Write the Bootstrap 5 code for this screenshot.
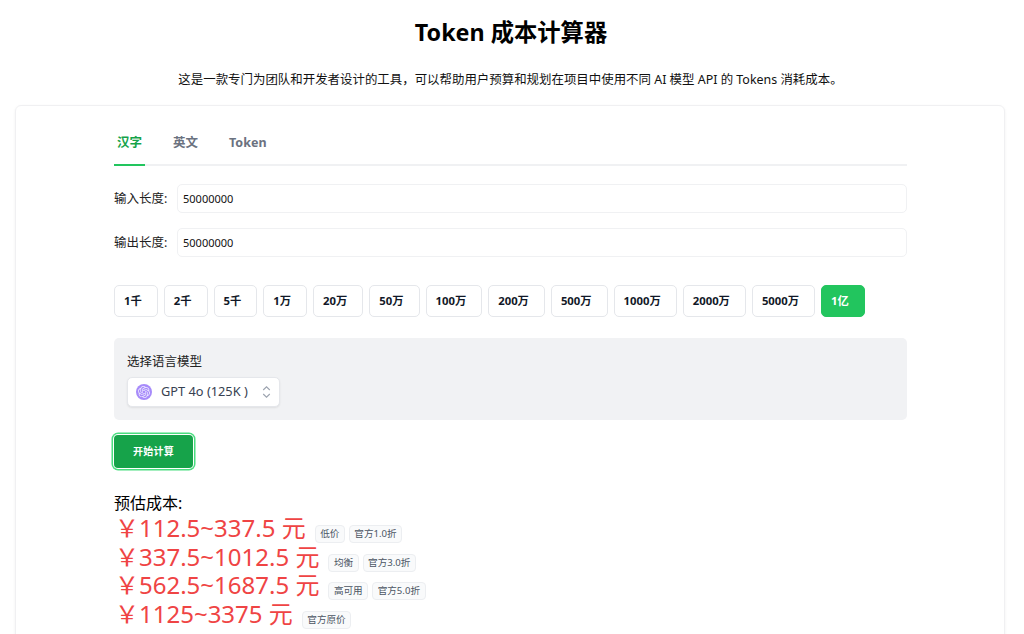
<!DOCTYPE html>
<html lang="zh">

<head>
    <meta charset="UTF-8" />
    <meta name="viewport" content="width=device-width, initial-scale=1.0" />
    <title>Token 成本计算器</title>
    <link href="https://cdn.jsdelivr.net/npm/bootstrap@5.3.0/dist/css/bootstrap.min.css" rel="stylesheet" />
    <style>
        html, body {
            height: 634px;
            overflow: hidden;
        }

        body {
            font-family: "Noto Sans", "Noto Sans CJK SC", sans-serif;
            font-size: 13px;
            color: #111827;
            background: #fff;
        }

        .page-title {
            font-size: 23.3px;
            font-weight: 700;
            line-height: 32px;
            margin: 0;
            padding: 16px 2px 0 0;
            color: #000;
        }

        .page-sub {
            font-size: 12.45px;
            line-height: 18px;
            margin: 0;
            padding: 23px 3px 0 0;
            height: 57px;
            color: #111;
        }

        .calc-card {
            margin: 0 19px 0 15px;
            border: 1px solid #f0f0f2;
            border-radius: 6px;
            box-shadow: 0 1px 3px rgba(0, 0, 0, .06);
            padding: 18px 97px 60px 98px;
        }

        .tab-row {
            border-bottom: 2px solid #f0f1f3;
            height: 42px;
            margin-bottom: 18px;
        }

        .tab-item {
            font-size: 12.5px;
            font-weight: 700;
            color: #6b7280;
            line-height: 38px;
            height: 42px;
            padding: 0 3px;
            margin-right: 25px;
        }

        .tab-item.on {
            color: #16a34a;
            border-bottom: 2px solid #22c55e;
        }

        .len-row {
            height: 29px;
            margin-bottom: 15px;
        }

        .len-label {
            width: 63px;
            flex: none;
            padding-top: 2px;
            color: #222;
            font-size: 12.5px;
        }

        .len-input {
            height: 29px;
            padding: 0 5px;
            font-size: 11px;
            border: 1px solid #f0f1f3;
            border-radius: 5px;
            color: #111;
        }

        .amt-row {
            gap: 6px;
            margin-top: 28px;
        }

        .amt-btn {
            height: 32px;
            padding: 0 15px 0 9px;
            font-size: 11.3px;
            font-weight: 700;
            color: #111827;
            background: #fff;
            border: 1px solid #e5e7eb;
            border-radius: 5px;
        }

        .amt-btn.on {
            background: #22c55e;
            border-color: #22c55e;
            color: #fff;
        }

        .model-panel {
            background: #f1f2f4;
            border-radius: 5px;
            height: 82px;
            padding: 14px 13px 0;
            margin-top: 21px;
        }

        .model-label {
            font-size: 12.5px;
            line-height: 20px;
            margin-bottom: 5px;
            color: #222;
        }

        .model-pick {
            width: 153px;
            height: 30px;
            background: #fff;
            border: 1px solid #e5e7eb;
            border-radius: 5px;
            box-shadow: 0 1px 2px rgba(0, 0, 0, .08);
            padding: 0 8px;
            font-size: 12.8px;
            color: #374151;
        }

        .pick-text {
            margin-left: 9px;
        }

        .go-btn {
            width: 79px;
            height: 33px;
            margin: 15px 0 0;
            background: #16a34a;
            border: 0;
            border-radius: 4px;
            color: #fff;
            font-size: 10px;
            font-weight: 700;
            letter-spacing: .3px;
            box-shadow: 0 0 0 1px #fff, 0 0 0 2.5px #4ade80;
            display: block;
            padding: 0;
        }

        .cost-title {
            font-size: 16px;
            line-height: 21px;
            margin-top: 25px;
            color: #000;
        }

        .cost-line {
            height: 28.5px;
            line-height: 28.5px;
            white-space: nowrap;
            padding-left: 1px;
        }

        .cost-val {
            display: inline-block;
            font-size: 24px;
            color: #ef4444;
            margin-right: 9px;
        }

        .cost-tag {
            display: inline-block;
            font-size: 9.6px;
            line-height: 16px;
            height: 18px;
            padding: 0 4.5px;
            margin-right: 4px;
            color: #4b5563;
            background: #f9fafb;
            border: 1px solid #eceef1;
            border-radius: 4px;
            vertical-align: 0;
        }
    </style>
</head>

<body>
    <h1 class="page-title text-center">Token 成本计算器</h1>
    <p class="page-sub text-center">这是一款专门为团队和开发者设计的工具，可以帮助用户预算和规划在项目中使用不同 AI 模型 API 的 Tokens 消耗成本。</p>

    <div class="calc-card">
        <div class="tab-row d-flex">
            <div class="tab-item on">汉字</div>
            <div class="tab-item">英文</div>
            <div class="tab-item">Token</div>
        </div>

        <div class="len-row d-flex align-items-center">
            <div class="len-label">输入长度:</div>
            <input class="len-input form-control shadow-none" value="50000000">
        </div>
        <div class="len-row d-flex align-items-center">
            <div class="len-label">输出长度:</div>
            <input class="len-input form-control shadow-none" value="50000000">
        </div>

        <div class="amt-row d-flex">
            <button class="amt-btn">1千</button>
            <button class="amt-btn">2千</button>
            <button class="amt-btn">5千</button>
            <button class="amt-btn">1万</button>
            <button class="amt-btn">20万</button>
            <button class="amt-btn">50万</button>
            <button class="amt-btn">100万</button>
            <button class="amt-btn">200万</button>
            <button class="amt-btn">500万</button>
            <button class="amt-btn">1000万</button>
            <button class="amt-btn">2000万</button>
            <button class="amt-btn">5000万</button>
            <button class="amt-btn on">1亿</button>
        </div>

        <div class="model-panel">
            <div class="model-label">选择语言模型</div>
            <div class="model-pick d-flex align-items-center">
                <svg width="16" height="16" viewBox="0 0 16 16">
                    <circle cx="8" cy="8" r="8" fill="#a78bfa" />
                    <path transform="translate(2 2) scale(.5)" fill="#efeaff" d="M22.2819 9.8211a5.9847 5.9847 0 0 0-.5157-4.9108 6.0462 6.0462 0 0 0-6.5098-2.9A6.0651 6.0651 0 0 0 4.9807 4.1818a5.9847 5.9847 0 0 0-3.9977 2.9 6.0462 6.0462 0 0 0 .7427 7.0966 5.98 5.98 0 0 0 .511 4.9107 6.051 6.051 0 0 0 6.5146 2.9001A5.9847 5.9847 0 0 0 13.2599 24a6.0557 6.0557 0 0 0 5.7718-4.2058 5.9894 5.9894 0 0 0 3.9977-2.9001 6.0557 6.0557 0 0 0-.7475-7.0729zm-9.022 12.6081a4.4755 4.4755 0 0 1-2.8764-1.0408l.1419-.0804 4.7783-2.7582a.7948.7948 0 0 0 .3927-.6813v-6.7369l2.02 1.1686a.071.071 0 0 1 .038.052v5.5826a4.504 4.504 0 0 1-4.4945 4.4944zm-9.6607-4.1254a4.4708 4.4708 0 0 1-.5346-3.0137l.142.0852 4.783 2.7582a.7712.7712 0 0 0 .7806 0l5.8428-3.3685v2.3324a.0804.0804 0 0 1-.0332.0615L9.74 19.9502a4.4992 4.4992 0 0 1-6.1408-1.6464zM2.3408 7.8956a4.485 4.485 0 0 1 2.3655-1.9728V11.6a.7664.7664 0 0 0 .3879.6765l5.8144 3.3543-2.0201 1.1685a.0757.0757 0 0 1-.071 0l-4.8303-2.7865A4.504 4.504 0 0 1 2.3408 7.872zm16.5963 3.8558L13.1038 8.364 15.1192 7.2a.0757.0757 0 0 1 .071 0l4.8303 2.7913a4.4944 4.4944 0 0 1-.6765 8.1042v-5.6772a.79.79 0 0 0-.407-.667zm2.0107-3.0231l-.142-.0852-4.7735-2.7818a.7759.7759 0 0 0-.7854 0L9.409 9.2297V6.8974a.0662.0662 0 0 1 .0284-.0615l4.8303-2.7866a4.4992 4.4992 0 0 1 6.6802 4.66zM8.3065 12.863l-2.02-1.1638a.0804.0804 0 0 1-.038-.0567V6.0742a4.4992 4.4992 0 0 1 7.3757-3.4537l-.142.0805L8.704 5.459a.7948.7948 0 0 0-.3927.6813zm1.0976-2.3654l2.602-1.4998 2.6069 1.4998v2.9994l-2.5974 1.4997-2.6067-1.4997Z" />
                </svg>
                <span class="pick-text flex-grow-1">GPT 4o (125K )</span>
                <svg width="9" height="14" viewBox="0 0 9 14" fill="none" stroke="#9ca3af" stroke-width="1.1">
                    <path d="M1.2 5 4.5 1.8 7.8 5" />
                    <path d="M1.2 9 4.5 12.2 7.8 9" />
                </svg>
            </div>
        </div>

        <button class="go-btn">开始计算</button>

        <div class="cost-title">预估成本:</div>
        <div class="cost-line"><span class="cost-val">￥112.5~337.5 元</span><span class="cost-tag">低价</span><span class="cost-tag">官方1.0折</span></div>
        <div class="cost-line"><span class="cost-val">￥337.5~1012.5 元</span><span class="cost-tag">均衡</span><span class="cost-tag">官方3.0折</span></div>
        <div class="cost-line"><span class="cost-val">￥562.5~1687.5 元</span><span class="cost-tag">高可用</span><span class="cost-tag">官方5.0折</span></div>
        <div class="cost-line"><span class="cost-val">￥1125~3375 元</span><span class="cost-tag">官方原价</span></div>
    </div>

    <script src="https://cdn.jsdelivr.net/npm/bootstrap@5.3.0/dist/js/bootstrap.bundle.min.js"></script>
</body>

</html>
